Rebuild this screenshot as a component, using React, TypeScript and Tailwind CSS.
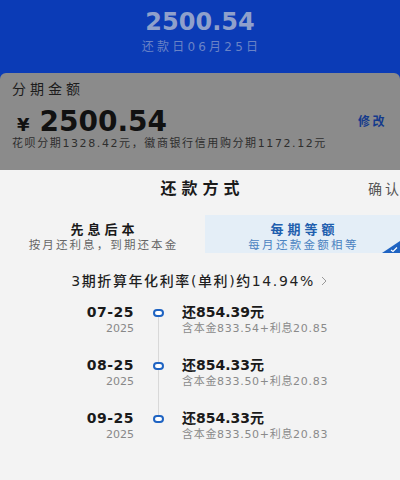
import React from 'react';

const font = { fontFamily: '"DejaVu Sans", "Noto Sans CJK SC", sans-serif' };

const plans = [
  { date: '07-25', year: '2025', amount: '还854.39元', detail: '含本金833.54+利息20.85' },
  { date: '08-25', year: '2025', amount: '还854.33元', detail: '含本金833.50+利息20.83' },
  { date: '09-25', year: '2025', amount: '还854.33元', detail: '含本金833.50+利息20.83' },
];

export default function App() {
  return (
    <div className="w-[400px] h-[480px] overflow-hidden bg-[#0b3bb6] flex flex-col" style={font}>
      {/* Dimmed header */}
      <div className="h-[73px] flex flex-col items-center pt-[7px]">
        <div className="text-[24px] font-bold leading-[30px] text-[#8fa0cb]">2500.54</div>
        <div className="text-[12px] leading-[16px] mt-[2px] text-[#6a83c6] tracking-[3.2px] pl-[3px]">还款日06月25日</div>
      </div>

      {/* Amount card (dimmed) */}
      <div className="h-[97px] bg-[#8b8b8b] rounded-t-[6px] pl-[12px] pr-[13px] pt-[7px]">
        <div className="text-[14px] leading-[18px] text-[#1c1c1c] tracking-[4px]">分期金额</div>
        <div className="flex items-center justify-between mt-[9px] h-[30px]">
          <div className="flex items-baseline text-[#111]">
            <span className="text-[18px] font-bold ml-[5px] mr-[10px]">¥</span>
            <span className="text-[28px] font-bold leading-[30px]">2500.54</span>
          </div>
          <span className="text-[12px] text-[#143a8c] font-bold tracking-[2.5px]">修改</span>
        </div>
        <div className="text-[11px] leading-[14px] text-[#2e2e2e] tracking-[1.6px] whitespace-nowrap">花呗分期1328.42元，徽商银行信用购分期1172.12元</div>
      </div>

      {/* Bottom sheet */}
      <div className="flex-1 bg-[#f3f3f3] flex flex-col">
        <div className="relative h-[38px] flex items-center justify-center">
          <span className="text-[16px] font-bold text-[#1a1a1a] tracking-[5px] pl-[5px]">还款方式</span>
          <span className="absolute left-[368px] text-[14px] text-[#555] tracking-[3px] whitespace-nowrap">确认</span>
        </div>

        <div className="flex h-[38px] mt-[7px]">
          <div className="flex-1 flex flex-col items-center pt-[7px]">
            <span className="text-[13px] font-bold leading-[16px] text-[#1a1a1a] tracking-[4px] pl-[4px]">先息后本</span>
            <span className="text-[11.5px] leading-[14px] text-[#666] tracking-[2.1px] pl-[2px]">按月还利息，到期还本金</span>
          </div>
          <div className="relative w-[195px] bg-[#e4eef7] flex flex-col items-center pt-[7px]">
            <span className="text-[13px] font-bold leading-[16px] text-[#1f5fae] tracking-[4px] pl-[4px]">每期等额</span>
            <span className="text-[11.5px] leading-[14px] text-[#4a82c0] tracking-[2.3px] pl-[2px]">每月还款金额相等</span>
            <svg className="absolute right-0 bottom-0" width="18" height="12" viewBox="0 0 18 12">
              <path d="M18 0 L18 12 L0 12 Z" fill="#1e63c2" />
              <path d="M9 9 L11 10.5 L15 6.5" stroke="#fff" strokeWidth="1.2" fill="none" />
            </svg>
          </div>
        </div>

        <div className="flex items-center justify-center mt-[20px] h-[16px]">
          <span className="text-[14px] font-medium text-[#1f1f1f] tracking-[1.6px] ml-[-2px]">3期折算年化利率(单利)约14.94%</span>
          <svg className="ml-[6px]" width="6" height="10" viewBox="0 0 6 10">
            <path d="M1 1 L5 5 L1 9" stroke="#999" strokeWidth="1" fill="none" />
          </svg>
        </div>

        <div className="mt-[13px] flex flex-col">
          {plans.map((p, i) => (
            <div key={i} className="flex h-[53px]">
              <div className="w-[134px] flex flex-col items-end">
                <span className="text-[14px] font-bold leading-[20px] text-[#1a1a1a] tracking-[0.5px]">{p.date}</span>
                <span className="text-[11px] leading-[14px] text-[#888]">{p.year}</span>
              </div>
              <div className="w-[48px] flex flex-col items-center relative">
                <div className="mt-[7px] w-[11px] h-[8px] rounded-full border-[2px] border-[#1e63c2] bg-white z-10" />
                {i < plans.length - 1 && (
                  <div className="absolute top-[15px] bottom-[-7px] w-px bg-[#d8d8d8]" />
                )}
              </div>
              <div className="flex flex-col">
                <span className="text-[14px] font-bold leading-[20px] text-[#1a1a1a]">{p.amount}</span>
                <span className="text-[11px] leading-[14px] text-[#8a8a8a] tracking-[0.7px]">{p.detail}</span>
              </div>
            </div>
          ))}
        </div>
      </div>
    </div>
  );
}
